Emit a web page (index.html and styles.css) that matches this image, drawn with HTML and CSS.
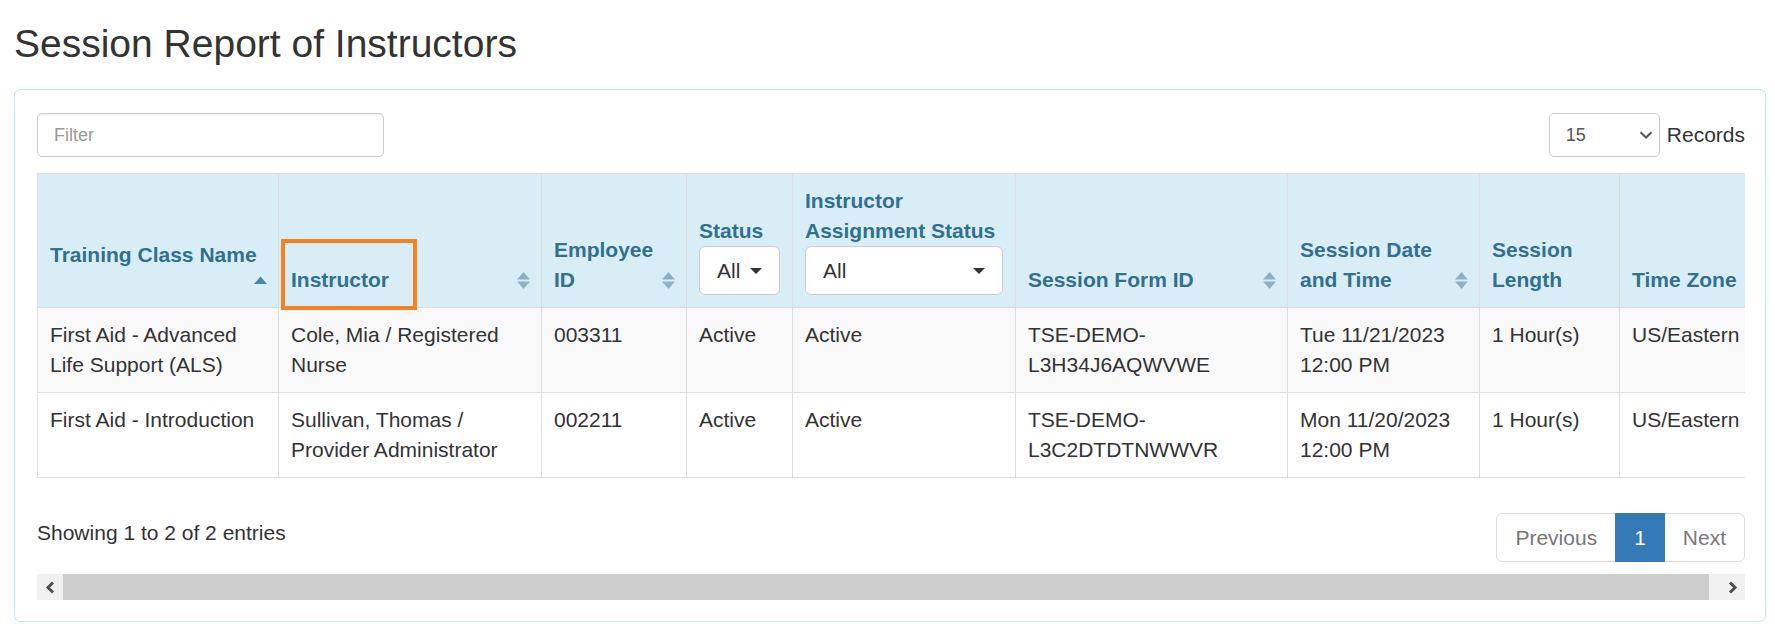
FILE: index.html
```html
<!DOCTYPE html>
<html lang="en">
<head>
<meta charset="utf-8">
<title>Session Report of Instructors</title>
<link rel="stylesheet" href="styles.css">
</head>
<body>
<div class="page">
  <h1 class="page-title">Session Report of Instructors</h1>
  <div class="panel">
    <div class="dt-top">
      <input class="filter-input" type="text" placeholder="Filter">
      <div class="length">
        <div class="length-select">
          <span>15</span>
          <svg class="chev-down" width="14" height="8" viewBox="0 0 14 8"><polyline points="1.5,1.2 7,6.5 12.5,1.2" fill="none" stroke="#555" stroke-width="2"/></svg>
        </div>
        <span class="length-label">Records</span>
      </div>
    </div>

    <div class="table-clip">
      <table class="report">
        <colgroup>
          <col class="c1"><col class="c2"><col class="c3"><col class="c4"><col class="c5"><col class="c6"><col class="c7"><col class="c8"><col class="c9">
        </colgroup>
        <thead>
          <tr>
            <th class="sortable sort-below">Training Class Name<span class="sort-icon"><svg width="13" height="17" viewBox="0 0 13 17"><polygon points="0,12 6.5,4.5 13,12" fill="#4e86a8"/></svg></span></th>
            <th class="sortable">Instructor<span class="sort-icon"><svg width="13" height="17" viewBox="0 0 13 17"><polygon points="0,7.5 6.5,0 13,7.5" fill="#8fb1c7"/><polygon points="0,9.5 13,9.5 6.5,17" fill="#8fb1c7"/></svg></span><span class="highlight"></span></th>
            <th class="sortable">Employee ID<span class="sort-icon"><svg width="13" height="17" viewBox="0 0 13 17"><polygon points="0,7.5 6.5,0 13,7.5" fill="#8fb1c7"/><polygon points="0,9.5 13,9.5 6.5,17" fill="#8fb1c7"/></svg></span></th>
            <th>Status<div class="hselect"><span>All</span><span class="caret"></span></div></th>
            <th>Instructor Assignment Status<div class="hselect"><span>All</span><span class="caret"></span></div></th>
            <th class="sortable">Session Form ID<span class="sort-icon"><svg width="13" height="17" viewBox="0 0 13 17"><polygon points="0,7.5 6.5,0 13,7.5" fill="#8fb1c7"/><polygon points="0,9.5 13,9.5 6.5,17" fill="#8fb1c7"/></svg></span></th>
            <th class="sortable">Session Date and Time<span class="sort-icon"><svg width="13" height="17" viewBox="0 0 13 17"><polygon points="0,7.5 6.5,0 13,7.5" fill="#8fb1c7"/><polygon points="0,9.5 13,9.5 6.5,17" fill="#8fb1c7"/></svg></span></th>
            <th>Session Length</th>
            <th>Time Zone</th>
          </tr>
        </thead>
        <tbody>
          <tr class="odd">
            <td>First Aid - Advanced Life Support (ALS)</td>
            <td>Cole, Mia / Registered Nurse</td>
            <td>003311</td>
            <td>Active</td>
            <td>Active</td>
            <td>TSE-DEMO-L3H34J6AQWVWE</td>
            <td>Tue 11/21/2023 12:00 PM</td>
            <td>1 Hour(s)</td>
            <td>US/Eastern</td>
          </tr>
          <tr class="even">
            <td>First Aid - Introduction</td>
            <td>Sullivan, Thomas / Provider Administrator</td>
            <td>002211</td>
            <td>Active</td>
            <td>Active</td>
            <td>TSE-DEMO-L3C2DTDTNWWVR</td>
            <td>Mon 11/20/2023 12:00 PM</td>
            <td>1 Hour(s)</td>
            <td>US/Eastern</td>
          </tr>
        </tbody>
      </table>
    </div>

    <div class="dt-bottom">
      <div class="info">Showing 1 to 2 of 2 entries</div>
      <ul class="pagination">
        <li class="disabled"><a>Previous</a></li>
        <li class="active"><a>1</a></li>
        <li class="disabled"><a>Next</a></li>
      </ul>
    </div>

    <div class="hscroll">
      <div class="hs-btn"><svg width="11" height="13" viewBox="0 0 11 13"><polyline points="8,1.5 3,6.5 8,11.5" fill="none" stroke="#505050" stroke-width="3"/></svg></div>
      <div class="hs-thumb"></div>
      <div class="hs-track"></div>
      <div class="hs-btn"><svg width="11" height="13" viewBox="0 0 11 13"><polyline points="3,1.5 8,6.5 3,11.5" fill="none" stroke="#505050" stroke-width="3"/></svg></div>
    </div>
  </div>
</div>
</body>
</html>
```

FILE: styles.css
```css
* { box-sizing: border-box; }

html, body {
  margin: 0;
  padding: 0;
  background: #fff;
}

body {
  font-family: "Liberation Sans", Arial, sans-serif;
  font-size: 21px;
  line-height: 30px;
  color: #333;
}

.page {
  padding: 0 9px 0 14px;
}

.page-title {
  margin: 22px 0 24px;
  font-size: 39px;
  line-height: 43px;
  font-weight: normal;
  color: #333;
}

.panel {
  border: 1px solid #bce8f1;
  border-radius: 6px;
  padding: 23px 20px 21px 22px;
}

/* top controls */
.dt-top {
  display: flex;
  justify-content: space-between;
  align-items: center;
  height: 44px;
}

.filter-input {
  width: 347px;
  height: 44px;
  border: 1px solid #ccc;
  border-radius: 5px;
  padding: 0 16px;
  font-family: "Liberation Sans", Arial, sans-serif;
  font-size: 18px;
  color: #555;
  box-shadow: inset 0 1px 1px rgba(0,0,0,.075);
  outline: none;
}

.filter-input::placeholder { color: #999; }

.length {
  display: flex;
  align-items: center;
}

.length-select {
  width: 111px;
  height: 44px;
  border: 1px solid #ccc;
  border-radius: 5px;
  padding: 0 6px 0 16px;
  display: flex;
  align-items: center;
  justify-content: space-between;
  font-size: 18px;
  color: #555;
  background: #fff;
}

.length-label {
  margin-left: 7px;
  font-size: 21px;
  color: #333;
}

/* table */
.table-clip {
  margin-top: 16px;
  width: 100%;
  overflow: hidden;
}

.report {
  table-layout: fixed;
  width: 1712px;
  border-collapse: collapse;
  border-spacing: 0;
}

.c1 { width: 241px; }
.c2 { width: 263px; }
.c3 { width: 145px; }
.c4 { width: 106px; }
.c5 { width: 223px; }
.c6 { width: 272px; }
.c7 { width: 192px; }
.c8 { width: 140px; }
.c9 { width: 130px; }

.report th,
.report td {
  border: 1px solid #ddd;
  padding: 12px;
  text-align: left;
}

.report th {
  background: #d9edf7;
  color: #31708f;
  font-weight: bold;
  vertical-align: bottom;
}

.report td {
  vertical-align: top;
  color: #333;
}

.report tr.odd td { background: #f9f9f9; }
.report tr.even td { background: #fff; }

.report th.sortable {
  position: relative;
  padding-right: 30px;
}

.report th.sort-below {
  padding-right: 12px;
  padding-bottom: 37px;
}

.sort-icon {
  position: absolute;
  right: 11px;
  bottom: 18px;
  width: 13px;
  height: 17px;
  display: block;
}

.sort-icon svg { display: block; }

.highlight {
  position: absolute;
  left: 2px;
  top: 65px;
  width: 136px;
  height: 71px;
  border: 4px solid #f58220;
  pointer-events: none;
}

.hselect {
  display: flex;
  align-items: center;
  justify-content: space-between;
  height: 49px;
  border: 1px solid #ccc;
  border-radius: 6px;
  background: #fff;
  padding: 0 17px;
  font-weight: normal;
  color: #333;
}

.caret {
  width: 0;
  height: 0;
  border-top: 6px solid #333;
  border-left: 6px solid transparent;
  border-right: 6px solid transparent;
}

/* bottom */
.dt-bottom {
  margin-top: 32px;
  display: flex;
  justify-content: space-between;
  align-items: flex-start;
}

.info {
  padding-top: 8px;
  color: #333;
}

.pagination {
  list-style: none;
  margin: 3px 0 0;
  padding: 0;
  display: flex;
}

.pagination li a {
  display: block;
  padding: 9px 18px;
  line-height: 29px;
  border: 1px solid #ddd;
  margin-left: -1px;
  color: #777;
  background: #fff;
}

.pagination li:first-child a {
  margin-left: 0;
  border-radius: 6px 0 0 6px;
}

.pagination li:last-child a {
  border-radius: 0 6px 6px 0;
}

.pagination li.active a {
  background: #337ab7;
  border-color: #337ab7;
  color: #fff;
  position: relative;
}

/* horizontal scrollbar */
.hscroll {
  margin-top: 12px;
  height: 26px;
  display: flex;
  background: #f1f1f1;
}

.hs-btn {
  width: 26px;
  display: flex;
  align-items: center;
  justify-content: center;
  background: #f1f1f1;
}

.hs-thumb {
  flex: 1;
  background: #cdcdcd;
}

.hs-track {
  width: 10px;
}
```
